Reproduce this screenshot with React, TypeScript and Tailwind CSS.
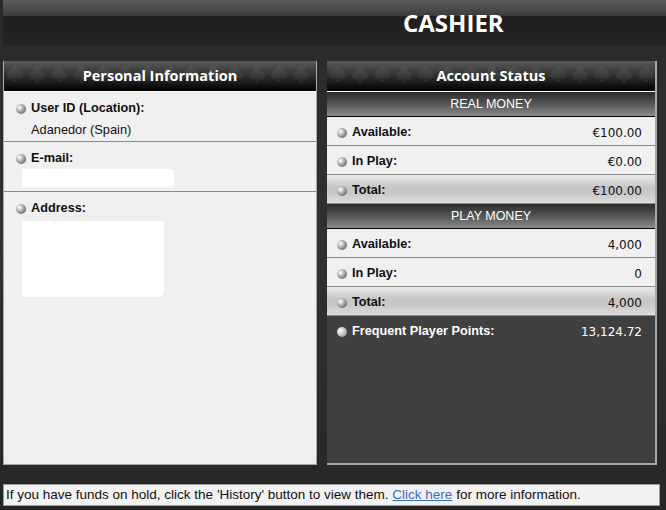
import React from 'react';

function Bullet({ dark }: { dark?: boolean }) {
  return (
    <span
      className={`inline-block w-[10px] h-[10px] rounded-full flex-shrink-0 ${
        dark
          ? 'bg-[radial-gradient(circle_at_35%_35%,#ffffff,#c8c8c8_45%,#7a7a7a)]'
          : 'bg-[radial-gradient(circle_at_35%_35%,#ffffff,#9c9c9c_50%,#3e3e3e)]'
      }`}
    />
  );
}

// faint card-suit texture behind the panel titles
function SuitPattern() {
  return (
    <svg className="absolute inset-0 w-full h-full" aria-hidden="true">
      <defs>
        <pattern id="suits" width="44" height="30" patternUnits="userSpaceOnUse">
          <path
            d="M11 4 C7 9 3 11 3 14.5 C3 17 5.5 18.5 8 17.5 C8.8 17.2 9.5 16.6 10 16 L9 21 L13 21 L12 16 C12.5 16.6 13.2 17.2 14 17.5 C16.5 18.5 19 17 19 14.5 C19 11 15 9 11 4Z"
            fill="#ffffff"
          />
          <circle cx="33" cy="9" r="4" fill="#ffffff" />
          <circle cx="29" cy="15" r="4" fill="#ffffff" />
          <circle cx="37" cy="15" r="4" fill="#ffffff" />
          <path d="M32 15 L31 22 L35 22 L34 15Z" fill="#ffffff" />
        </pattern>
      </defs>
      <rect width="100%" height="100%" fill="url(#suits)" opacity="0.05" />
    </svg>
  );
}

function PanelHeader({ title }: { title: string }) {
  return (
    <div className="relative h-[30px] overflow-hidden bg-[linear-gradient(to_bottom,#5a5a5a,#2a2a2a_55%,#000000)] flex items-center justify-center">
      <SuitPattern />
      <span className="relative text-white font-bold text-[14.5px] font-['Open_Sans',sans-serif]">{title}</span>
    </div>
  );
}

function SubHeader({ title }: { title: string }) {
  return (
    <div className="h-[25px] border-b border-black bg-[linear-gradient(to_bottom,#2c2c2c,#5a5a5a_55%,#8c8c8c)] flex items-center justify-center text-white text-[12.5px]">
      {title}
    </div>
  );
}

function Row({ label, value, total }: { label: string; value: string; total?: boolean }) {
  return (
    <div
      className={`h-[29px] flex items-center pl-[10px] pr-[13px] pt-[3px] border-b border-[#8a8a8a] text-[12.7px] font-bold text-[#111] ${
        total
          ? 'bg-[linear-gradient(to_bottom,#eaeaea,#c6c6c6_45%,#cacaca_70%,#dedede)]'
          : 'bg-[#f0f0f0]'
      }`}
    >
      <Bullet />
      <span className="ml-[5px] flex-1">{label}</span>
      <span className="font-normal text-[12px] font-['DejaVu_Sans',sans-serif]">{value}</span>
    </div>
  );
}

function InfoSection({ label, children, last }: { label: string; children?: React.ReactNode; last?: boolean }) {
  return (
    <div className={`px-[12px] pt-[7px] ${last ? 'flex-1' : 'h-[50px] border-b border-[#8a8a8a]'}`}>
      <div className="flex items-center gap-[5px] text-[12.7px] font-bold text-[#111]">
        <Bullet />
        <span>{label}</span>
      </div>
      {children}
    </div>
  );
}

export default function App() {
  return (
    <div className="w-[666px] h-[510px] overflow-hidden bg-[linear-gradient(to_bottom,#2a2a2a,#303030_50%,#262626)] font-['Liberation_Sans',Arial,sans-serif] flex flex-col">
      <div className="ml-[3px] h-[46px] bg-[linear-gradient(to_bottom,#5c5c5c_0px,#3c3c3c_16px,#1e1e1e_16px,#242424_46px)] flex items-center pl-[400px]">
        <span className="text-white font-bold text-[24px] font-['Open_Sans',sans-serif] leading-none">CASHIER</span>
      </div>

      <div className="flex gap-[10px] ml-[3px] mt-[15px] h-[404px]">
        <div className="w-[314px] flex flex-col border-x border-b border-[#a8a8a8]">
          <PanelHeader title="Personal Information" />
          <div className="flex-1 flex flex-col bg-[#f0f0f0] border-t border-white">
            <InfoSection label="User ID (Location):">
              <div className="pl-[15px] mt-[2px] text-[12.8px] text-[#111]">Adanedor (Spain)</div>
            </InfoSection>
            <InfoSection label="E-mail:">
              <div className="ml-[6px] mt-[1px] w-[152px] h-[18px] bg-white rounded-r-[4px]" />
            </InfoSection>
            <InfoSection label="Address:" last>
              <div className="ml-[6px] mt-[3px] w-[142px] h-[76px] bg-white rounded-br-[6px]" />
            </InfoSection>
          </div>
        </div>

        <div className="w-[330px] flex flex-col border-r-2 border-b-2 border-[#a8a8a8] bg-[#404040]">
          <PanelHeader title="Account Status" />
          <div className="h-px bg-white" />
          <SubHeader title="REAL MONEY" />
          <Row label="Available:" value="€100.00" />
          <Row label="In Play:" value="€0.00" />
          <Row label="Total:" value="€100.00" total />
          <SubHeader title="PLAY MONEY" />
          <Row label="Available:" value="4,000" />
          <Row label="In Play:" value="0" />
          <Row label="Total:" value="4,000" total />
          <div className="h-[29px] flex items-center pl-[10px] pr-[13px] pt-[3px] text-[12.7px] font-bold text-white">
            <Bullet dark />
            <span className="ml-[5px] flex-1">Frequent Player Points:</span>
            <span className="font-normal text-[12px] font-['DejaVu_Sans',sans-serif]">13,124.72</span>
          </div>
        </div>
      </div>

      <div className="ml-[3px] mt-[19px] w-[657px] h-[22px] bg-[#f2f2f2] border border-[#9a9a9a] flex items-center pl-[2px] text-[13.5px] text-[#111] whitespace-nowrap">
        If you have funds on hold, click the 'History' button to view them.&nbsp;
        <span className="text-[#3a6fb8] underline">Click here</span>
        &nbsp;for more information.
      </div>
    </div>
  );
}
